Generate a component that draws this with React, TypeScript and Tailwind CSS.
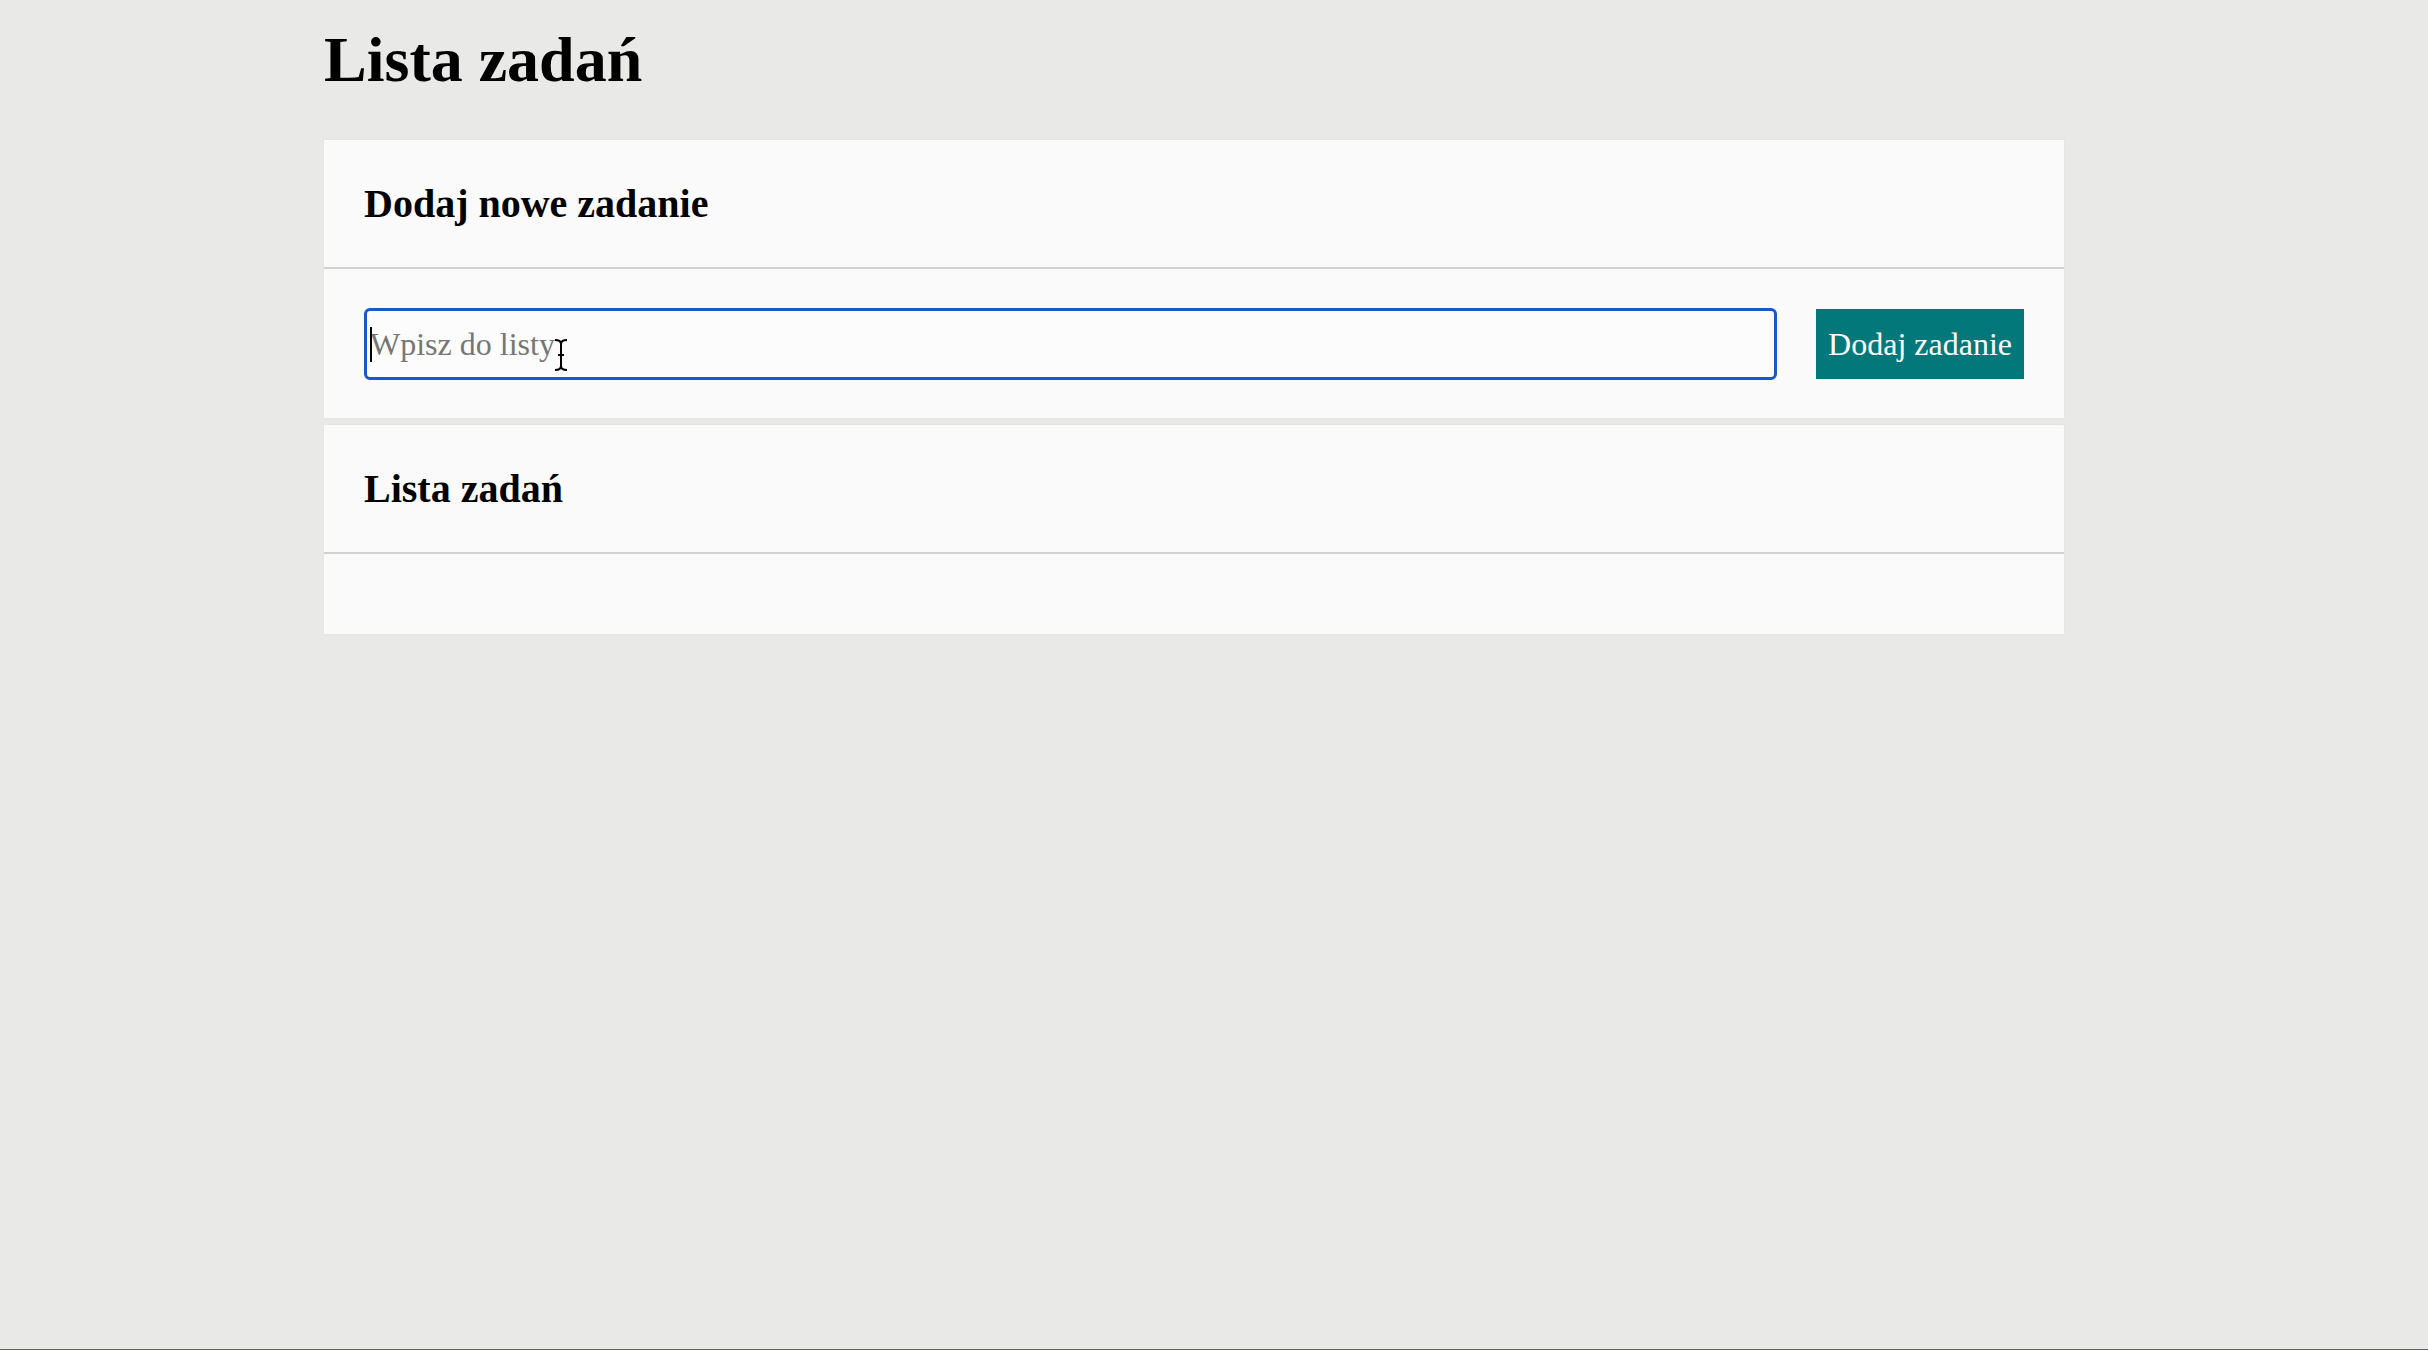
import { useState } from "react";

const serif = "font-['Liberation_Serif','Times_New_Roman',serif]";

function Card({ title, children, bodyClass }: { title: string; children?: React.ReactNode; bodyClass: string }) {
  return (
    <section className="bg-[#fafafa] shadow-[0_0_2px_rgba(0,0,0,0.06)]">
      <div className="h-[129px] px-10 flex items-center border-b-2 border-[#d2d2d2]">
        <h2 className="text-[40px] leading-none font-bold text-black">{title}</h2>
      </div>
      <div className={bodyClass}>{children}</div>
    </section>
  );
}

export default function App() {
  const [task, setTask] = useState("");
  const [tasks, setTasks] = useState<string[]>([]);

  function add() {
    if (!task.trim()) return;
    setTasks((t) => [...t, task.trim()]);
    setTask("");
  }

  return (
    <div className={`${serif} h-[1350px] bg-[#e9e9e7] border-b border-[#5f6b58]`}>
      <div className="ml-[324px] w-[1740px] pt-[28px]">
        <h1 className="text-[64px] leading-none font-bold text-black">Lista zadań</h1>

        <div className="mt-[48px] flex flex-col gap-[7px]">
          <Card title="Dodaj nowe zadanie" bodyClass="px-10 pt-[39px] pb-[38px] flex items-center gap-[39px]">
            <div className="relative flex-1">
              <input
                value={task}
                onChange={(e) => setTask(e.target.value)}
                placeholder="Wpisz do listy"
                className="w-full h-[72px] border-[3px] border-[#1559cc] rounded-[6px] pl-[3px] pr-1 text-[32px] text-black placeholder:text-[#767676] bg-[#fcfcfc] outline-none"
              />
              {/* text caret */}
              <span className="absolute left-[6px] top-[19px] w-[2px] h-[35px] bg-black" />
              {/* mouse I-beam */}
              <svg className="absolute left-[190px] top-[31px]" width="14" height="32" viewBox="0 0 14 32">
                <path
                  d="M1 1 C5 1 7 2 7 5 V27 C7 30 9 31 13 31 M13 1 C9 1 7 2 7 5 M7 27 C7 30 5 31 1 31 M4 16 H10"
                  fill="none"
                  stroke="black"
                  strokeWidth="2"
                />
              </svg>
            </div>
            <button
              onClick={add}
              className="h-[70px] px-3 bg-[#02787a] text-white text-[32px] leading-none"
            >
              Dodaj zadanie
            </button>
          </Card>

          <Card title="Lista zadań" bodyClass="min-h-[79px] px-10 py-[40px]">
            {tasks.length > 0 && (
              <ul className="text-[32px]">
                {tasks.map((t, i) => (
                  <li key={i}>{t}</li>
                ))}
              </ul>
            )}
          </Card>
        </div>
      </div>
    </div>
  );
}
